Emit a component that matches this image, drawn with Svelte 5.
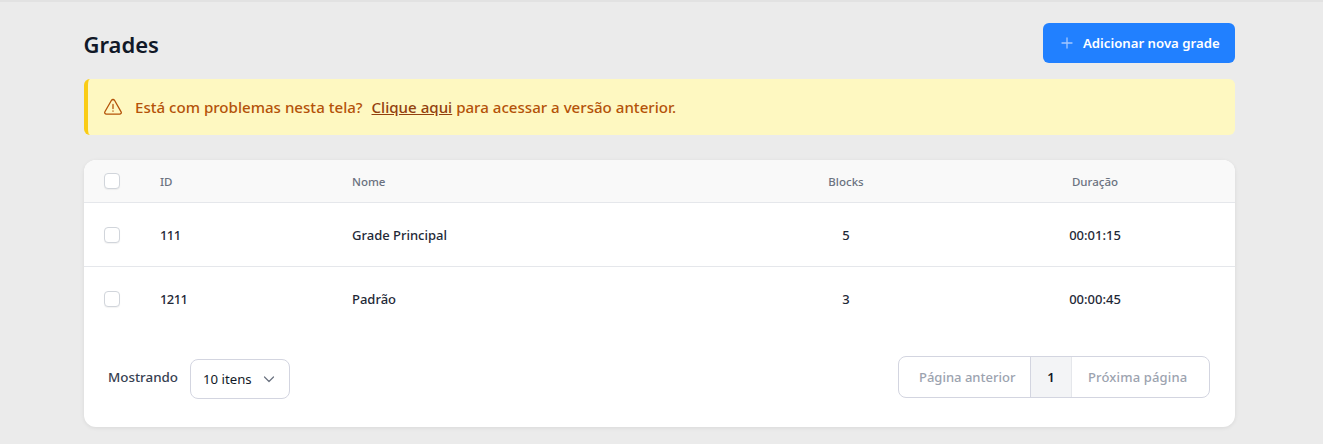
<script>
  const rows = [
    { id: '111', name: 'Grade Principal', blocks: 5, duration: '00:01:15' },
    { id: '1211', name: 'Padrão', blocks: 3, duration: '00:00:45' }
  ];
</script>

<div class="page">
  <header class="top">
    <h1>Grades</h1>
    <button class="add">
      <svg width="14" height="14" viewBox="0 0 14 14" fill="none" stroke="#a5c8ff" stroke-width="1.3" stroke-linecap="round">
        <path d="M7 2v10M2 7h10" />
      </svg>
      Adicionar nova grade
    </button>
  </header>

  <div class="alert">
    <svg width="20" height="20" viewBox="0 0 20 20" fill="none" stroke="#b45309" stroke-width="1.3" stroke-linecap="round" stroke-linejoin="round">
      <path d="M8.5 3.3 1.9 14.800c-.7 1.200.2 2.400 1.500 2.400h13.200c1.300 0 2.200-1.200 1.500-2.400L11.500 3.300c-.7-1.100-2.300-1.100-3 0Z" />
      <path d="M10 7.500v4M10 14v.2" />
    </svg>
    <p>Está com problemas nesta tela? <a href="#top">Clique aqui</a> para acessar a versão anterior.</p>
  </div>

  <section class="card">
    <div class="row head">
      <span class="box"></span>
      <span>ID</span>
      <span>Nome</span>
      <span class="mid">Blocks</span>
      <span class="mid">Duração</span>
    </div>
    {#each rows as row}
      <div class="row body">
        <span class="box"></span>
        <span class="id">{row.id}</span>
        <span>{row.name}</span>
        <span class="mid">{row.blocks}</span>
        <span class="mid">{row.duration}</span>
      </div>
    {/each}

    <footer class="foot">
      <div class="showing">
        <span class="label">Mostrando</span>
        <div class="select">
          10 itens
          <svg width="12" height="12" viewBox="0 0 12 12" fill="none" stroke="#6b7280" stroke-width="1.2" stroke-linecap="round" stroke-linejoin="round">
            <path d="M1.500 4 6 8.500 10.500 4" />
          </svg>
        </div>
      </div>
      <nav class="pager">
        <span class="nav prev">Página anterior</span>
        <span class="current">1</span>
        <span class="nav next">Próxima página</span>
      </nav>
    </footer>
  </section>
</div>

<style>
  :global(body) {
    background: #ebebeb;
    font-family: "Noto Sans", "Open Sans", sans-serif;
  }

  .page {
    box-sizing: border-box;
    height: 444px;
    padding: 23px 88px 0 84px;
    border-top: 2px solid #e2e2e2;
    overflow: hidden;
  }

  .top {
    display: flex;
    justify-content: space-between;
    align-items: center;
    height: 40px;
    margin-top: -2px;
  }

  h1 {
    margin: 2px 0 0 -0.5px;
    font-size: 22px;
    font-weight: 600;
    color: #111827;
  }

  .add {
    display: flex;
    align-items: center;
    gap: 9px;
    height: 40px;
    width: 192px;
    padding: 0 0 0 17px;
    border: none;
    border-radius: 6px;
    background: #2180ff;
    color: #fff;
    font: 600 13.2px "Noto Sans", sans-serif;
  }

  .alert {
    display: flex;
    align-items: center;
    gap: 12px;
    height: 56px;
    margin-top: 16px;
    padding-left: 15px;
    box-sizing: border-box;
    border-left: 4px solid #facc15;
    border-radius: 6px;
    background: #fef8c1;
    color: #b45309;
    font-size: 15.100px;
    font-weight: 500;
  }

  .alert p {
    margin: 0;
  }

  .alert a {
    margin: 0 0 0 5px;
    color: #92400e;
  }

  .card {
    margin-top: 25px;
    height: 267px;
    border-radius: 12px;
    background: #fff;
    box-shadow: 0 1px 4px rgba(0, 0, 0, 0.08);
    overflow: hidden;
  }

  .row {
    display: grid;
    grid-template-columns: 76px 192px 385px 218px 280px;
    align-items: center;
    border-bottom: 1px solid #e5e7eb;
  }

  .row > .box {
    margin-left: 20px;
  }

  .head {
    height: 43px;
    box-sizing: border-box;
    background: #f9f9f9;
    color: #6b7280;
    font-size: 11.500px;
    font-weight: 500;
  }

  .body {
    height: 64px;
    box-sizing: border-box;
    color: #1f2937;
    font-size: 13px;
    font-weight: 500;
  }

  .body:last-of-type {
    border-bottom: none;
  }

  .id {
    letter-spacing: -0.6px;
  }

  .mid {
    text-align: center;
  }

  .box {
    display: block;
    box-sizing: border-box;
    width: 16px;
    height: 16px;
    border: 1px solid #d1d5db;
    border-radius: 4px;
    background: #fff;
    box-shadow: 0 1px 1px rgba(0, 0, 0, 0.05);
  }

  .foot {
    display: flex;
    justify-content: space-between;
    align-items: center;
    padding: 24px 25px 0 24px;
  }

  .showing {
    display: flex;
    align-items: center;
    gap: 12px;
  }

  .label {
    color: #374151;
    font-size: 13.400px;
    font-weight: 500;
  }

  .select {
    display: flex;
    align-items: center;
    gap: 11px;
    box-sizing: border-box;
    width: 100px;
    height: 40px;
    margin-top: 4px;
    padding-left: 12px;
    border: 1px solid #d3d5e0;
    border-radius: 8px;
    color: #111827;
    font-size: 13.200px;
  }

  .pager {
    display: flex;
    height: 42px;
    box-sizing: border-box;
    border: 1px solid #d3d5e0;
    border-radius: 8px;
    font-size: 13px;
    font-weight: 500;
    overflow: hidden;
  }

  .pager span {
    display: flex;
    align-items: center;
  }

  .nav {
    box-sizing: border-box;
    color: #9ca3af;
  }

  .prev {
    width: 131px;
    padding-left: 20px;
  }

  .next {
    width: 137px;
    padding-left: 16px;
    letter-spacing: 0.15px;
  }

  .current {
    justify-content: center;
    width: 42px;
    box-sizing: border-box;
    border-left: 1px solid #d3d5e0;
    border-right: 1px solid #e5e7eb;
    background: #f3f4f6;
    color: #111827;
    font-weight: 600;
  }
</style>
